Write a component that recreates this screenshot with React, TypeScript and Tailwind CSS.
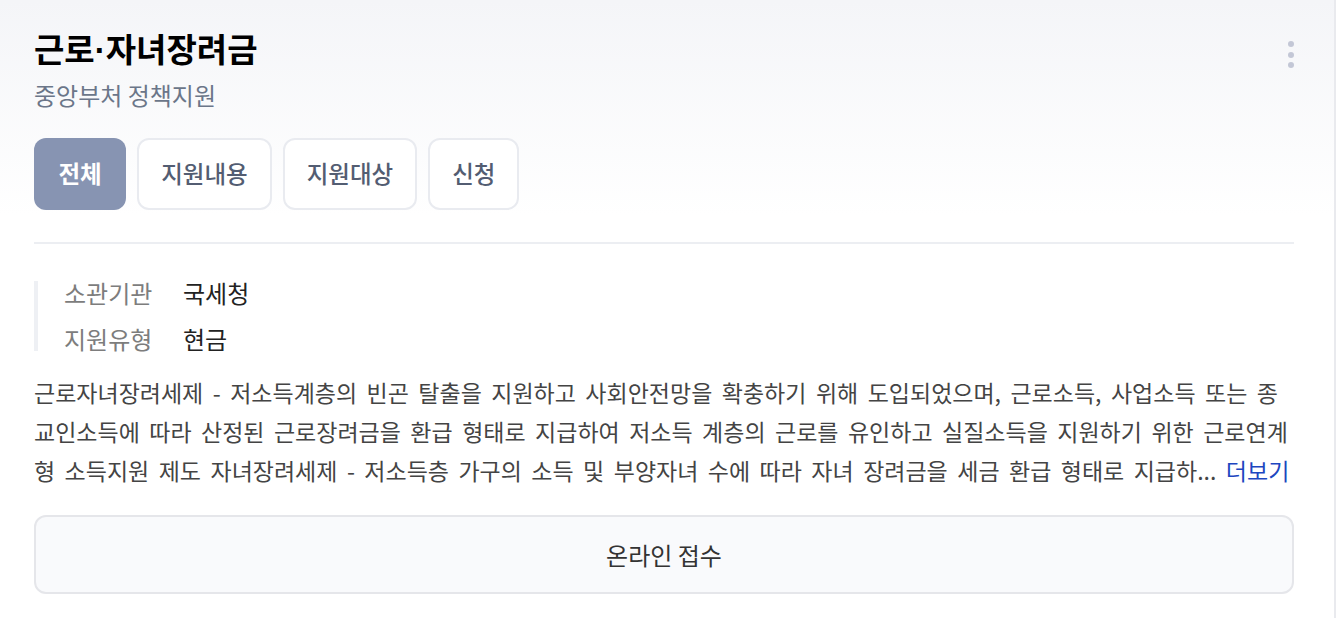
const tabs = ['전체', '지원내용', '지원대상', '신청']

const info = [
  { label: '소관기관', value: '국세청' },
  { label: '지원유형', value: '현금' },
]

const summary =
  '근로자녀장려세제 - 저소득계층의 빈곤 탈출을 지원하고 사회안전망을 확충하기 위해 도입되었으며, 근로소득, 사업소득 또는 종교인소득에 따라 산정된 근로장려금을 환급 형태로 지급하여 저소득 계층의 근로를 유인하고 실질소득을 지원하기 위한 근로연계형 소득지원 제도 자녀장려세제 - 저소득층 가구의 소득 및 부양자녀 수에 따라 자녀 장려금을 세금 환급 형태로 지급하...'

export default function App() {
  return (
    <div
      className="min-h-screen bg-white"
      style={{ fontFamily: '"Noto Sans CJK KR", "Noto Sans", sans-serif' }}
    >
      <div className="w-[1336px] border-r-2 border-[#e9eaee] bg-gradient-to-b from-[#f4f5f8] to-white to-35% pb-6">
        <div className="pl-[34px] pr-[40px] pt-[25px]">
          <div className="flex items-start justify-between">
            <div>
              <h1 className="text-[33px] font-bold leading-[46px] text-black">
                근로<span style={{ fontFamily: '"Liberation Sans", sans-serif' }}>·</span>자녀장려금
              </h1>
              <p className="mt-[5px] text-[24px] leading-[32px] text-[#6b7689]">중앙부처 정책지원</p>
            </div>
            <button className="mt-[16px] mr-[-4px] flex flex-col items-center gap-[4.5px] px-1">
              <span className="h-[6px] w-[6px] rounded-full bg-[#c3c7d6]" />
              <span className="h-[6px] w-[6px] rounded-full bg-[#c3c7d6]" />
              <span className="h-[6px] w-[6px] rounded-full bg-[#c3c7d6]" />
            </button>
          </div>

          <div className="mt-[27px] flex gap-[11px]">
            {tabs.map((tab, i) => (
              <button
                key={tab}
                className={
                  i === 0
                    ? 'h-[72px] rounded-[12px] bg-[#8794b2] px-[24.5px] text-[23.5px] font-bold text-white'
                    : 'h-[72px] rounded-[12px] border-2 border-[#e9ebf0] bg-white px-[22px] text-[23.5px] font-medium text-[#535d72]'
                }
              >
                {tab}
              </button>
            ))}
          </div>

          <div className="mt-[32px] h-[2px] bg-[#eceef2]" />

          <div className="mt-[37px] flex flex-col gap-[22px] border-l-4 border-[#eef0f4] pl-[26px]">
            {info.map((row) => (
              <div key={row.label} className="flex items-center leading-[24px]">
                <span className="w-[119px] text-[24px] text-[#7d7d7d]">{row.label}</span>
                <span className="text-[24px] text-[#222]">{row.value}</span>
              </div>
            ))}
          </div>

          <p className="mt-[22px] text-[23px] leading-[39px] text-[#444] [word-spacing:4.3px]">
            {summary} <a className="text-[#1d46c0]">더보기</a>
          </p>

          <button className="mt-[25px] h-[79px] w-full rounded-[12px] border-2 border-[#e5e6ea] bg-[#f9fafc] text-[24px] text-[#333]">
            온라인 접수
          </button>
        </div>
      </div>
    </div>
  )
}
